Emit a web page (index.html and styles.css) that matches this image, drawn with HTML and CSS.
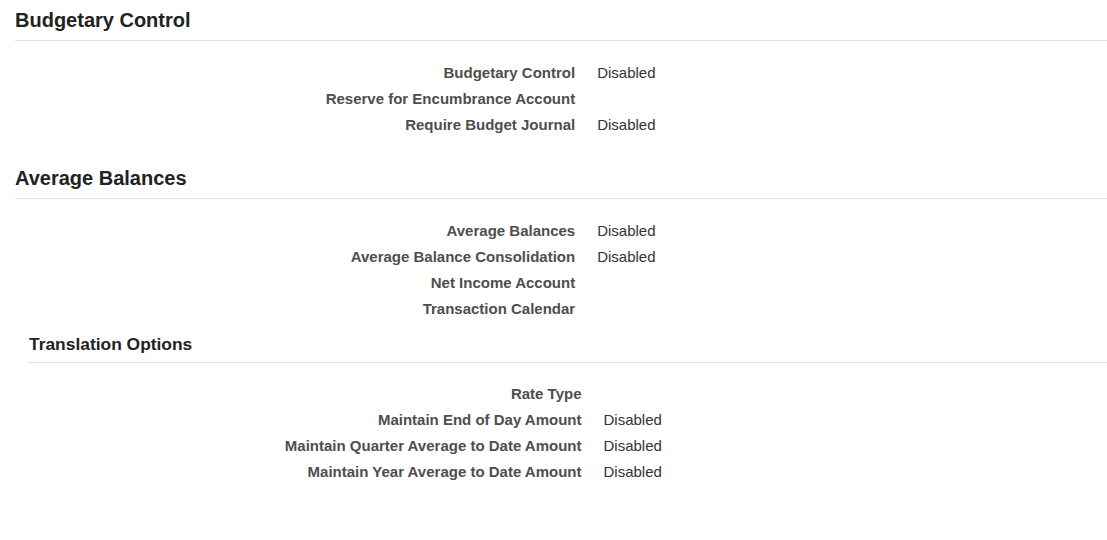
FILE: index.html
```html
<!DOCTYPE html>
<html>
<head>
<meta charset="utf-8">
<link rel="stylesheet" href="styles.css">
</head>
<body>
<div class="page">
  <section class="section">
    <h2 class="section-title">Budgetary Control</h2>
    <div class="form">
      <div class="label">Budgetary Control</div><div class="value">Disabled</div>
      <div class="label">Reserve for Encumbrance Account</div><div class="value"></div>
      <div class="label">Require Budget Journal</div><div class="value">Disabled</div>
    </div>
  </section>
  <section class="section section-gap">
    <h2 class="section-title">Average Balances</h2>
    <div class="form">
      <div class="label">Average Balances</div><div class="value">Disabled</div>
      <div class="label">Average Balance Consolidation</div><div class="value">Disabled</div>
      <div class="label">Net Income Account</div><div class="value"></div>
      <div class="label">Transaction Calendar</div><div class="value"></div>
    </div>
    <section class="subsection">
      <h3 class="sub-title">Translation Options</h3>
      <div class="form form-sub">
        <div class="label">Rate Type</div><div class="value"></div>
        <div class="label">Maintain End of Day Amount</div><div class="value">Disabled</div>
        <div class="label">Maintain Quarter Average to Date Amount</div><div class="value">Disabled</div>
        <div class="label">Maintain Year Average to Date Amount</div><div class="value">Disabled</div>
      </div>
    </section>
  </section>
</div>
</body>
</html>
```

FILE: styles.css
```css
html, body {
  margin: 0;
  padding: 0;
  background: #ffffff;
}
body {
  font-family: "Liberation Sans", Arial, sans-serif;
  color: #333333;
}
.page {
  padding-left: 15px;
}
.section-title {
  margin: 0;
  padding: 8px 0 8px 0;
  font-size: 20px;
  line-height: 24px;
  font-weight: bold;
  color: #222222;
  border-bottom: 1px solid #dbe2e8;
}
.section-gap {
  margin-top: 20px;
}
.form {
  display: grid;
  grid-template-columns: 51.3% 1fr;
  column-gap: 22px;
  margin-top: 19px;
}
.form-sub {
  margin-top: 18px;
}
.label {
  text-align: right;
  font-size: 15px;
  line-height: 26px;
  font-weight: bold;
  color: #4e4e4e;
  white-space: nowrap;
}
.value {
  font-size: 15px;
  line-height: 26px;
  color: #333333;
  min-height: 26px;
}
.subsection {
  margin-left: 13px;
  margin-top: 4px;
}
.sub-title {
  margin: 0;
  padding: 8px 0 8px 1px;
  font-size: 17.4px;
  line-height: 20px;
  font-weight: bold;
  color: #222222;
  border-bottom: 1px solid #dbe2e8;
}
```
